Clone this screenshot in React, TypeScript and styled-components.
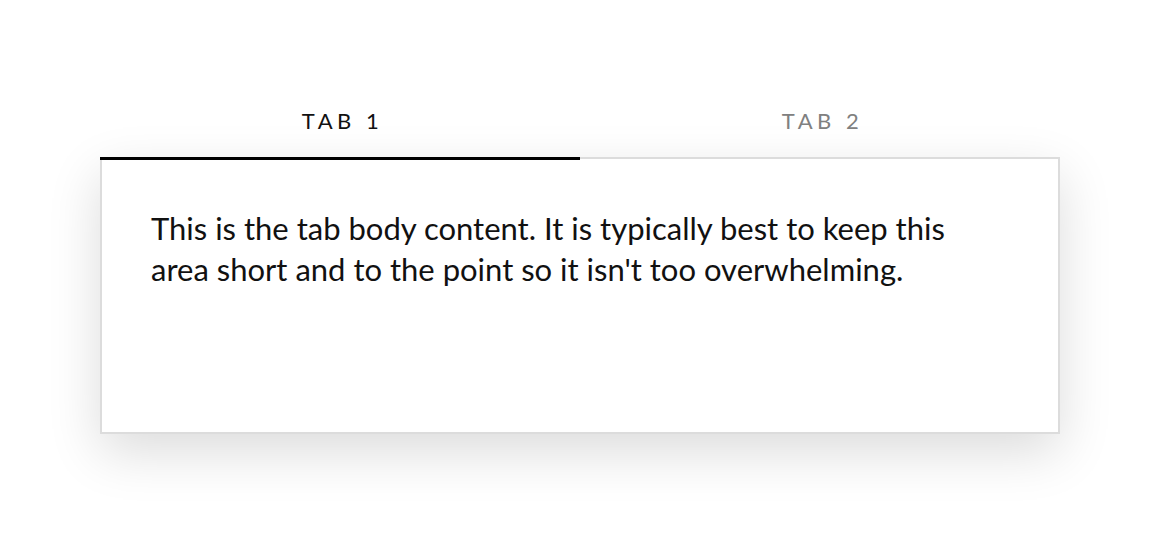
import { useState } from "react";
import styled, { createGlobalStyle } from "styled-components";

const GlobalStyle = createGlobalStyle`
body {
    margin: 0;
    background: #ffffff;
    font-family: Lato, "Open Sans", sans-serif;
    color: #111111;
}
`;

const Page = styled.div`
width: 960px;
margin: 0 auto;
padding: 100px 0;
`;

const TabList = styled.div`
display: grid;
grid-template-columns: 1fr 1fr;
position: relative;
z-index: 1;
`;

// buttons center their label vertically, so padding-bottom lifts it
const TabButton = styled.button<{ $active: boolean }>`
box-sizing: border-box;
height: 60px;
border: none;
background: transparent;
font-family: Lato, sans-serif;
font-size: 22px;
line-height: 1.2;
letter-spacing: 4.5px;
padding: 0 0 15px 5px;
text-align: center;
color: ${(props) => (props.$active ? "#111111" : "#808080")};
border-bottom: 3px solid ${(props) => (props.$active ? "#000000" : "transparent")};
margin-bottom: -3px;
cursor: pointer;
`;

const Panel = styled.div`
box-sizing: border-box;
height: 277px;
width: 960px;
border: 2px solid #dcdcdc;
background: #ffffff;
box-shadow: 0 18px 50px rgba(0, 0, 0, 0.14);
padding: 49px 49px;
`;

const Body = styled.p`
margin: 0;
max-width: 830px;
font-size: 31px;
line-height: 41px;
`;

const tabs = [
    {
        label: "TAB 1",
        body: "This is the tab body content. It is typically best to keep this area short and to the point so it isn't too overwhelming.",
    },
    {
        label: "TAB 2",
        body: "Second tab content goes here.",
    },
];

function App() {
    const [active, setActive] = useState(0);

    return (
        <>
            <GlobalStyle />
            <Page>
                <TabList>
                    {tabs.map((tab, i) => (
                        <TabButton key={tab.label} $active={i === active} onClick={() => setActive(i)}>
                            {tab.label}
                        </TabButton>
                    ))}
                </TabList>
                <Panel>
                    <Body>{tabs[active].body}</Body>
                </Panel>
            </Page>
        </>
    );
}

export default App;
